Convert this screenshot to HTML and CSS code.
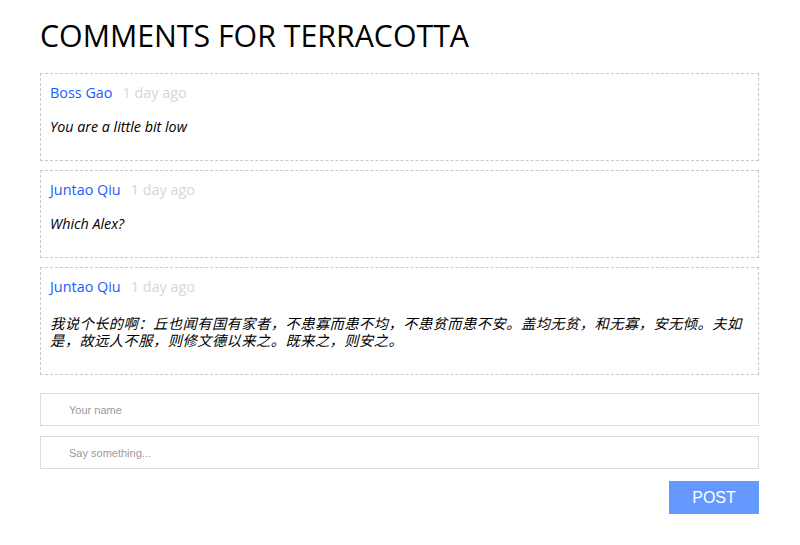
FILE: index.html
```html
<!DOCTYPE html>
<html>
<head>
<meta charset="utf-8">
<link rel="stylesheet" href="styles.css">
</head>
<body>
<div class="page">
  <h1 class="title">COMMENTS FOR TERRACOTTA</h1>
  <div class="comments">
    <div class="card">
      <div class="meta"><span class="author">Boss Gao</span><span class="time">1 day ago</span></div>
      <p class="text">You are a little bit low</p>
    </div>
    <div class="card">
      <div class="meta"><span class="author">Juntao Qiu</span><span class="time">1 day ago</span></div>
      <p class="text">Which Alex?</p>
    </div>
    <div class="card">
      <div class="meta"><span class="author">Juntao Qiu</span><span class="time">1 day ago</span></div>
      <p class="text cjk">我说个长的啊：丘也闻有国有家者，不患寡而患不均，不患贫而患不安。盖均无贫，和无寡，安无倾。夫如是，故远人不服，则修文德以来之。既来之，则安之。</p>
    </div>
  </div>
  <form class="form">
    <input class="field" type="text" placeholder="Your name">
    <input class="field" type="text" placeholder="Say something...">
    <div class="actions"><button class="post" type="button">POST</button></div>
  </form>
</div>
</body>
</html>
```
FILE: styles.css
```css
html, body { margin: 0; padding: 0; background: #fff; }
body { font-family: "Open Sans", "Noto Sans CJK SC", sans-serif; color: #000; }
.page { padding: 16px 41px 0 40px; }
.title {
  margin: 0 0 17px 0;
  font-size: 30.3px;
  font-weight: 400;
  line-height: 40px;
}
.comments { display: flex; flex-direction: column; gap: 9px; }
.card {
  border: 1px dashed #c8c8c8;
  padding: 9px 9px 9px 9px;
}
.meta { display: flex; gap: 10px; font-size: 14.4px; line-height: 20px; }
.author { color: #1a5cff; }
.time { color: #d6d6d6; }
.text {
  margin: 14px 0 14px 0;
  font-size: 14.3px;
  font-style: italic;
  line-height: 20px;
}
.text.cjk {
  margin-top: 18px;
  margin-bottom: 16px;
  line-height: 17px;
  letter-spacing: 0.42px;
}
.form { margin-top: 18px; display: flex; flex-direction: column; gap: 10px; }
.field {
  box-sizing: border-box;
  width: 100%;
  height: 33px;
  border: 1px solid #dcdcdc;
  border-radius: 0;
  padding: 0 0 0 28px;
  font-family: "Liberation Sans", Arial, sans-serif;
  font-size: 11px;
  outline: none;
}
.field::placeholder { color: #9a9a9a; }
.actions { display: flex; justify-content: flex-end; margin-top: 2px; }
.post {
  width: 90px;
  height: 33px;
  border: none;
  background: #6699ff;
  color: #fff;
  font-family: "Liberation Sans", Arial, sans-serif;
  font-size: 16px;
  padding: 0;
  cursor: pointer;
}
```
